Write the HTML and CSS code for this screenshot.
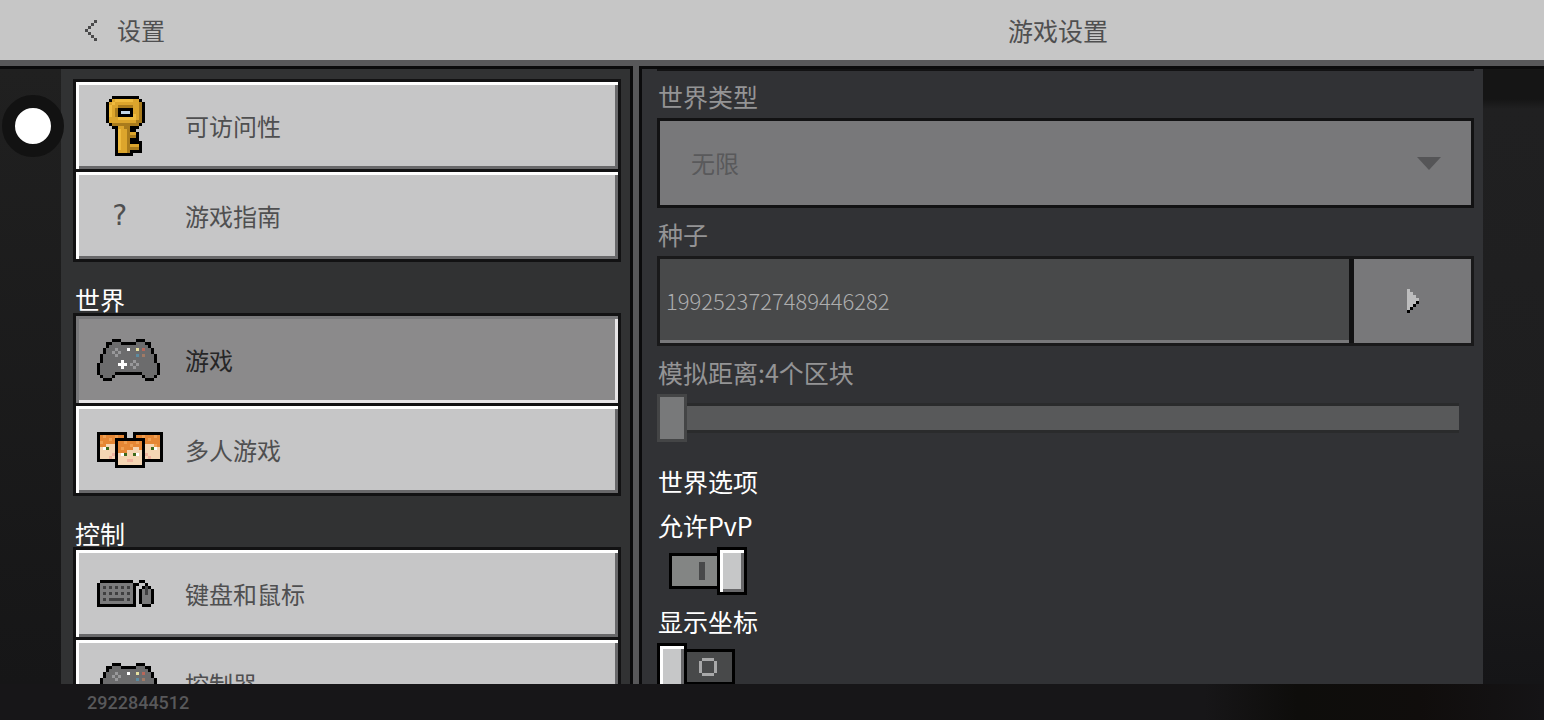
FILE: index.html
```
<!DOCTYPE html>
<html lang="zh-CN">
<head>
    <meta charset="UTF-8">
    <meta name="viewport" content="width=device-width, initial-scale=1.0">
    <title>游戏设置</title>
    <link rel="stylesheet" href="styles.css">
</head>
<body>
    <header class="topbar">
        <button type="button" class="back">
            <svg class="pixel-icon" data-icon="back"></svg>
            设置
        </button>
        <h1>游戏设置</h1>
    </header>

    <main class="screen">
        <div class="gutter">
            <button type="button" class="touch-dot" aria-label="菜单"></button>
        </div>

        <nav class="sidebar">
            <section class="group">
                <button type="button" class="item">
                    <span class="slot"><svg class="pixel-icon" data-icon="key"></svg></span>
                    可访问性
                </button>
                <button type="button" class="item">
                    <span class="slot question">?</span>
                    游戏指南
                </button>
            </section>

            <section class="group">
                <h2>世界</h2>
                <button type="button" class="item active">
                    <span class="slot"><svg class="pixel-icon" data-icon="controller"></svg></span>
                    游戏
                </button>
                <button type="button" class="item">
                    <span class="slot"><svg class="pixel-icon" data-icon="players"></svg></span>
                    多人游戏
                </button>
            </section>

            <section class="group">
                <h2>控制</h2>
                <button type="button" class="item">
                    <span class="slot"><svg class="pixel-icon" data-icon="keyboard"></svg></span>
                    键盘和鼠标
                </button>
                <button type="button" class="item">
                    <span class="slot"><svg class="pixel-icon" data-icon="controller"></svg></span>
                    控制器
                </button>
            </section>
        </nav>

        <div class="divider"></div>

        <form class="settings">
            <div class="field first">
                <label for="worldType">世界类型</label>
                <div class="dropdown">
                    <select id="worldType" disabled>
                        <option>无限</option>
                    </select>
                    <svg class="caret" viewBox="0 0 24 13"><path d="M0 0h24L12 13z"/></svg>
                </div>
            </div>

            <div class="field">
                <label for="seed">种子</label>
                <div class="seed">
                    <input type="text" id="seed" value="1992523727489446282" disabled>
                    <button type="button" aria-label="选择种子" disabled>
                        <svg class="pixel-icon" data-icon="play"></svg>
                    </button>
                </div>
            </div>

            <div class="field range-field">
                <label for="distance">模拟距离:4个区块</label>
                <input type="range" id="distance" min="4" max="12" value="4" disabled>
            </div>

            <h2>世界选项</h2>

            <div class="option">
                <label for="pvp">允许PvP</label>
                <input type="checkbox" class="toggle" id="pvp" checked>
            </div>

            <div class="option">
                <label for="coords">显示坐标</label>
                <input type="checkbox" class="toggle" id="coords">
            </div>
        </form>

        <div class="gutter right"></div>
    </main>

    <footer class="bottombar">2922844512</footer>

    <script src="icons.js"></script>
</body>
</html>
```
FILE: styles.css
```
*, *::before, *::after {
    box-sizing: border-box;
}
body {
    display: flex;
    flex-direction: column;
    height: 100vh;
    margin: 0;
    overflow: hidden;
    background: #171618;
    color: #fff;
    font-family: "Noto Sans CJK SC", sans-serif;
    font-weight: 400;
    font-size: 24px;
    line-height: 24px;
}
button, input, select {
    margin: 0;
    padding: 0;
    border: 0;
    border-radius: 0;
    color: inherit;
    font: inherit;
}
h1, h2 {
    margin: 0;
    font-size: 25px;
    font-weight: 400;
    line-height: 25px;
}
.pixel-icon {
    display: block;
    flex: none;
}

/* top bar */
.topbar {
    display: grid;
    grid-template-columns: 633fr 850fr 61fr;
    align-items: center;
    flex: none;
    height: 66px;
    border-bottom: 6px solid #58585a;
    background: #c6c6c6;
    color: #4f4f50;
}
.topbar h1 {
    text-align: center;
}
.back {
    display: flex;
    align-items: center;
    gap: 20px;
    padding-left: 85px;
    background: none;
}

/* columns */
.screen {
    display: grid;
    grid-template-columns: 61px minmax(0, 569fr) 12px minmax(0, 841fr) 61px;
    flex: 1;
    min-height: 0;
}
.gutter {
    padding: 26px 0 0 2px;
    border-top: 3px solid #0b0b0c;
    background: linear-gradient(#202020, #161617);
}
.gutter.right {
    background: linear-gradient(#151515 30px, #202021 40px, #1e1e1f 60%, #151517);
}
.touch-dot {
    display: block;
    position: relative;
    width: 62px;
    height: 62px;
    border: 13px solid #121212;
    border-radius: 50%;
    background: #fff;
}
.divider {
    border: solid #0b0b0c;
    border-width: 0 3px;
    background: #58585a;
}

/* left list */
.sidebar {
    min-height: 0;
    padding: 10px 9px 0 12px;
    overflow: hidden;
    border-top: 3px solid #0b0b0c;
    background: #313233;
}
.group {
    display: flex;
    flex-direction: column;
    margin-bottom: 26px;
}
.group h2 {
    height: 25px;
    padding-left: 2px;
    line-height: 23px;
}
.item {
    display: flex;
    align-items: center;
    height: 93px;
    padding-left: 18px;
    border: 3px solid #121213;
    background: #c6c6c7;
    box-shadow: inset 3px 3px 0 #fff, inset -3px -3px 0 #68686a;
    color: #4f4f50;
    text-align: left;
}
.item + .item {
    margin-top: -3px;
}
.item.active {
    background: #8b8a8b;
    box-shadow: inset 3px 3px 0 #78787a, inset -3px -3px 0 #e6e4e6;
    color: #262627;
}
.slot {
    flex: none;
    width: 91px;
    padding-left: 3px;
}
.question {
    padding-left: 17px;
    font-family: "DejaVu Sans Mono", monospace;
    font-size: 28px;
}

/* right panel */
.settings {
    min-height: 0;
    padding: 0 9px 0 15px;
    overflow: hidden;
    border-top: 3px solid #0b0b0c;
    background: #313235;
}
.field {
    margin-bottom: 12px;
    color: #949495;
}
.field.first {
    padding-top: 11px;
    border-top: 2px solid #121213;
}
.field label, .option label {
    display: block;
    height: 36px;
    padding-left: 1px;
    font-size: 25px;
    line-height: 28px;
}
.dropdown {
    display: grid;
    align-items: center;
    height: 90px;
    border: 3px solid #121213;
    background: #78787a;
}
.dropdown select, .caret {
    grid-area: 1 / 1;
}
.dropdown select {
    width: 100%;
    height: 100%;
    padding-left: 31px;
    appearance: none;
    background: none;
    color: #59595b;
    opacity: 1;
}
.caret {
    justify-self: end;
    width: 24px;
    height: 13px;
    margin-right: 30px;
    fill: #555557;
    pointer-events: none;
}
.seed {
    display: flex;
    height: 90px;
    border: 3px solid #19191a;
}
.seed input {
    flex: 1;
    min-width: 0;
    padding-left: 6px;
    border-bottom: 3px solid #78787a;
    background: #48494a;
    color: #adadae;
    font-size: 22px;
    font-weight: 300;
}
.seed button {
    display: flex;
    align-items: center;
    justify-content: center;
    width: 122px;
    border-left: 5px solid #121213;
    background: #78787a;
}
.range-field {
    margin-bottom: 27px;
}
input[type="range"] {
    display: block;
    width: calc(100% - 15px);
    height: 48px;
    appearance: none;
    background: linear-gradient(#2a2b2c, #2a2b2c) center / 100% 30px no-repeat;
}
input[type="range"]::-webkit-slider-runnable-track {
    height: 48px;
    background: linear-gradient(#58595a, #58595a) center / 100% 24px no-repeat;
}
input[type="range"]::-webkit-slider-thumb {
    box-sizing: border-box;
    width: 30px;
    height: 48px;
    appearance: none;
    border: 3px solid #444546;
    background: #78797a;
}
.settings h2 {
    margin-bottom: 18px;
    padding-left: 1px;
    line-height: 24px;
}
.option {
    margin-bottom: 12px;
}

/* switches: the thumb overlaps the end of the body */
.toggle {
    display: flex;
    align-items: center;
    width: 90px;
    height: 48px;
    appearance: none;
}
.toggle::before {
    content: "";
    order: 1;
    z-index: 1;
    width: 30px;
    height: 48px;
    border: 3px solid #000;
    background: #c6c7c8;
    box-shadow: inset 3px 3px 0 #fff, inset -3px -3px 0 #68686a;
}
.toggle::after {
    content: "";
    order: 2;
    width: 51px;
    height: 36px;
    margin-left: -3px;
    border: 3px solid #000;
    background:
        linear-gradient(#a8a8a9, #a8a8a9) 15px 6px / 12px 3px no-repeat,
        linear-gradient(#a8a8a9, #a8a8a9) 15px 21px / 12px 3px no-repeat,
        linear-gradient(#a8a8a9, #a8a8a9) 12px 9px / 3px 12px no-repeat,
        linear-gradient(#a8a8a9, #a8a8a9) 27px 9px / 3px 12px no-repeat,
        #48494a;
}
.toggle:checked {
    justify-content: flex-end;
}
.toggle:checked::before {
    order: 3;
    margin-left: -3px;
}
.toggle:checked::after {
    margin-left: 0;
    background: linear-gradient(#48494a, #48494a) 27px 6px / 6px 18px no-repeat, #838584;
}

/* bottom bar */
.bottombar {
    flex: none;
    height: 36px;
    padding: 1px 0 0 87px;
    background: linear-gradient(90deg, #171618 78%, #0e0d0b 84%, #100d0c 92%, #151416);
    color: #58585a;
    font-family: Roboto, sans-serif;
    font-size: 18px;
    font-weight: 500;
    line-height: 36px;
}
```
FILE: icons.js
```
// Each letter is one square of the icon, a dot is left empty.
const PIXEL = 3;

const icons = {
    back: {
        colors: { X: '#4a4a4b' },
        rows: [
            '...X',
            '..X.',
            '.X..',
            'X...',
            '.X..',
            '..X.',
            '...X'
        ]
    },
    play: {
        colors: { L: '#bdbdbe', B: '#000' },
        rows: [
            'L...',
            'LL..',
            'LLL.',
            'LLLL',
            'LLLB',
            'LLB.',
            'LB..',
            'B...'
        ]
    },
    key: {
        colors: { B: '#000', G: '#dca52c', L: '#efbb3e', D: '#a97b1c', W: '#c2d6e8' },
        rows: [
            '.....BBBBBBBBB..',
            '....BGLLLLLLGGB.',
            '...BGLGGGGGGGGDB',
            '...BLGGDDDDDGGDB',
            '...BLGDBBBBBGGDB',
            '...BLGDBWWWBGGDB',
            '...BLGDBBBBBLGDB',
            '...BGGGLLLLLLGDB',
            '...BGGGGGGGGGDDB',
            '....BDDDDDDDDDB.',
            '.....BBGGDDBBB..',
            '......BLGGDBB...',
            '......BLGGDGGB..',
            '......BLGGDDDB..',
            '......BLGGDBBB..',
            '......BLGGDBBBB.',
            '......BLGGDGGGB.',
            '......BLGGDDDDB.',
            '......BGGGDBBBB.',
            '......BBBBBB....'
        ]
    },
    controller: {
        colors: { B: '#000', G: '#6c6c6d', S: '#98989a', W: '#fff', Y: '#e6e0a0', R: '#b8675a', U: '#5c8ba0', O: '#a07a66' },
        rows: [
            '.....BBB.....BBB.....',
            '...BBGGGBBBBBGGGBB...',
            '...BGGGGGGGGGGGGGB...',
            '..BGGGSGGGWGGYGRGGB..',
            '..BGGSGSGGGGGGGGGGB..',
            '.BGGGGSGGGGGGUGOGGGB.',
            '.BGGGGGGGGGGGGGGGGGB.',
            '.BGGGGGGWGGGSGGGGGGB.',
            'BGGGGGGWWWGSGSGGGGGGB',
            'BGGGGGGGWGGGSGGGGGGGB',
            'BGGGGGGGGGGGGGGGGGGGB',
            'BGGGGGBBBBBBBBBGGGGGB',
            '.BGGGB.........BGGGB.',
            '..BBB...........BBB..'
        ]
    },
    players: {
        colors: { B: '#000', O: '#e58735', H: '#f0a052', P: '#f5d6b4', E: '#3f6b1c', W: '#fff', K: '#f0b4a0' },
        rows: [
            'BBBBBBBBBB..BBBBBBBBBB',
            'BOHOOOHOOB..BOOHOOOHOB',
            'BOOOHOBBBBBBBBBBOHOOOB',
            'BHOOOOBOOHOOOHOBOOOOOB',
            'BOOPPPBOOOOHOOOBPPPHOB',
            'BPWEPPBOHOOOPPOBPPEWPB',
            'BPPPPPBOOOPPPPPBPPPPPB',
            'BPPPPKBPWEPPEWPBKPPPPB',
            'BPPPKPBPPPPPPPPBPKPPPB',
            'BBBBBBBPPPKKPPPBBBBBBB',
            '......BPPPPPPPPB......',
            '......BBBBBBBBBB......'
        ]
    },
    keyboard: {
        colors: { B: '#000', G: '#7b7b7c', K: '#3f3f40' },
        rows: [
            '.BBBBBBBBBBB..BB...',
            'BGGGGGGGGGGGBB..B..',
            'BGKGKGKGKGKGB..BKB.',
            'BGGGGGGGGGGGB.BGKGB',
            'BGKGKGKGKGKGB.BGKGB',
            'BGGGGGGGGGGGB.BGGGB',
            'BGKGKKKKKGKGB.BGGGB',
            'BGGGGGGGGGGGB.BGGGB',
            'BBBBBBBBBBBBB..BBB.'
        ]
    }
};

document.querySelectorAll('.pixel-icon').forEach(svg => {
    const icon = icons[svg.dataset.icon];
    const width = icon.rows[0].length;
    const height = icon.rows.length;

    svg.setAttribute('viewBox', `0 0 ${width} ${height}`);
    svg.setAttribute('width', width * PIXEL);
    svg.setAttribute('height', height * PIXEL);
    svg.setAttribute('shape-rendering', 'crispEdges');

    Object.entries(icon.colors).forEach(([letter, color]) => {
        let d = '';
        icon.rows.forEach((row, y) => {
            [...row].forEach((cell, x) => {
                if (cell === letter) {
                    d += `M${x} ${y}h1v1h-1z`;
                }
            });
        });
        const path = document.createElementNS('http://www.w3.org/2000/svg', 'path');
        path.setAttribute('d', d);
        path.setAttribute('fill', color);
        svg.appendChild(path);
    });
});
```
